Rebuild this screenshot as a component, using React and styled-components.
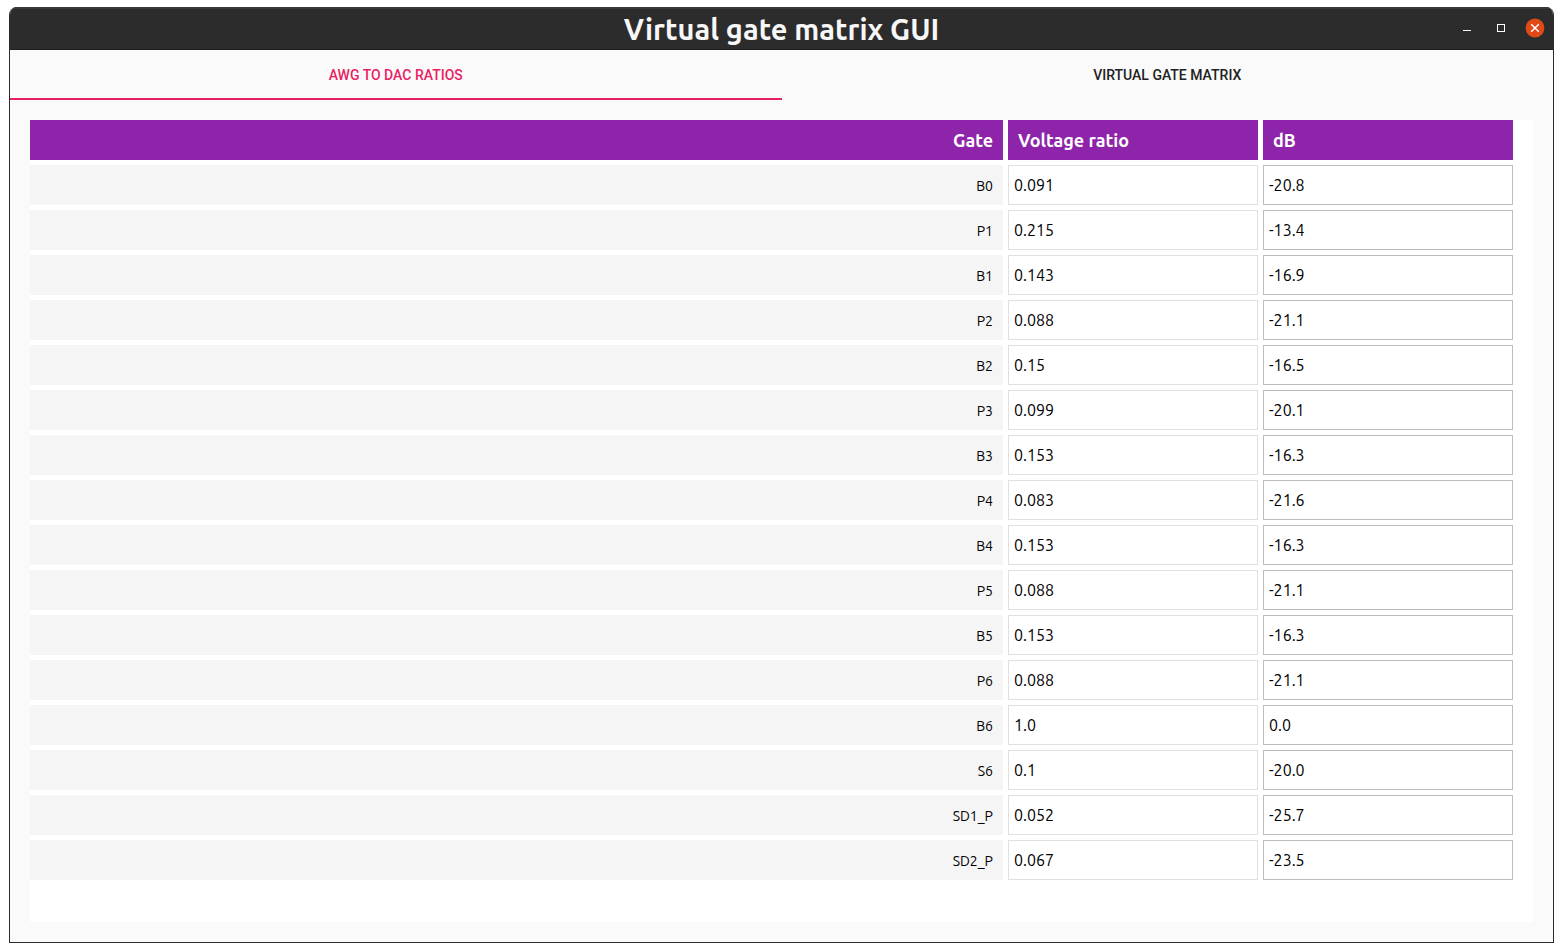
import React, { useState } from 'react';
import styled, { createGlobalStyle } from 'styled-components';

const GlobalStyle = createGlobalStyle`
    * {
        box-sizing: border-box;
    }

    body {
        margin: 0;
        background: #ffffff;
        font-family: Ubuntu, "Noto Sans", sans-serif;
        color: #000000;
    }
`;

const Page = styled.div`
    display: flex;
    min-height: 100vh;
    padding: 7px 9px 9px;
`;

const Window = styled.div`
    display: flex;
    flex: 1;
    flex-direction: column;
    border: 1px solid #2c2c2c;
    border-top: none;
    border-radius: 8px 8px 0 0;
    background: #fafafa;
    overflow: hidden;
`;

const TitleBar = styled.header`
    display: grid;
    grid-template-columns: 1fr auto 1fr;
    align-items: center;
    height: 43px;
    padding: 0 8px;
    background: #2c2c2c;
    border-top: 2px solid #383838;
    border-bottom: 1px solid #1e1e1e;
`;

const Title = styled.h1`
    grid-column: 2;
    margin: 0;
    font-size: 29px;
    line-height: 40px;
    font-weight: 700;
    color: #f7f7f7;
`;

const WindowButtons = styled.div`
    display: flex;
    justify-content: flex-end;
    gap: 14px;
    padding-bottom: 2px;
`;

const WindowButton = styled.button`
    display: flex;
    width: 20px;
    height: 20px;
    padding: 0;
    border: none;
    background: none;
`;

const Tabs = styled.div`
    display: flex;
    height: 50px;
`;

const Tab = styled.button`
    flex: 1;
    padding: 2px 0 0;
    border: none;
    border-bottom: 2px solid ${({ $active }) => ($active ? '#e91e63' : 'transparent')};
    background: none;
    font-family: Roboto, sans-serif;
    font-size: 14px;
    line-height: 20px;
    font-weight: 500;
    text-transform: uppercase;
    color: ${({ $active }) => ($active ? '#e91e63' : '#212121')};
`;

const Panel = styled.main`
    flex: 1;
    margin: 20px;
    padding: 0 20px 40px 0;
    background: #ffffff;
`;

const Table = styled.table`
    display: grid;
    gap: 5px;
`;

const TableGroup = styled.tbody`
    display: grid;
    gap: 5px;
`;

const Row = styled.tr`
    display: grid;
    grid-template-columns: 1fr 250px 250px;
    gap: 5px;
`;

const HeaderCell = styled.th`
    height: 40px;
    padding: 0 10px;
    background: #8e24aa;
    font-size: 18px;
    line-height: 40px;
    font-weight: 700;
    text-align: ${({ $align }) => $align || 'left'};
    color: #ffffff;
`;

const GateCell = styled.th`
    height: 40px;
    padding: 1px 10px 0;
    background: #f5f5f5;
    font-size: 14px;
    line-height: 40px;
    font-weight: 400;
    text-align: right;
`;

const Cell = styled.td`
    padding: 0;
`;

const ValueInput = styled.input`
    display: block;
    width: 100%;
    height: 40px;
    padding: 0 5px;
    border: 1px solid ${({ $strong }) => ($strong ? '#bdbdbd' : '#e0e0e0')};
    border-radius: 0;
    background: #ffffff;
    font-family: inherit;
    font-size: 16px;
    color: #000000;
`;

const tabs = ['AWG to DAC ratios', 'Virtual gate matrix'];

const gates = [
    { name: 'B0', ratio: '0.091', db: '-20.8' },
    { name: 'P1', ratio: '0.215', db: '-13.4' },
    { name: 'B1', ratio: '0.143', db: '-16.9' },
    { name: 'P2', ratio: '0.088', db: '-21.1' },
    { name: 'B2', ratio: '0.15', db: '-16.5' },
    { name: 'P3', ratio: '0.099', db: '-20.1' },
    { name: 'B3', ratio: '0.153', db: '-16.3' },
    { name: 'P4', ratio: '0.083', db: '-21.6' },
    { name: 'B4', ratio: '0.153', db: '-16.3' },
    { name: 'P5', ratio: '0.088', db: '-21.1' },
    { name: 'B5', ratio: '0.153', db: '-16.3' },
    { name: 'P6', ratio: '0.088', db: '-21.1' },
    { name: 'B6', ratio: '1.0', db: '0.0' },
    { name: 'S6', ratio: '0.1', db: '-20.0' },
    { name: 'SD1_P', ratio: '0.052', db: '-25.7' },
    { name: 'SD2_P', ratio: '0.067', db: '-23.5' },
];

const WindowControls = () => (
    <WindowButtons>
        <WindowButton aria-label="Minimize">
            <svg width="20" height="20" viewBox="0 0 20 20">
                <rect x="6" y="12" width="8" height="1" fill="#ffffff" />
            </svg>
        </WindowButton>
        <WindowButton aria-label="Maximize">
            <svg width="20" height="20" viewBox="0 0 20 20">
                <rect x="6.5" y="6.5" width="7" height="7" fill="none" stroke="#ffffff" />
            </svg>
        </WindowButton>
        <WindowButton aria-label="Close">
            <svg width="20" height="20" viewBox="0 0 20 20">
                <circle cx="10" cy="10" r="9.4" fill="#e04a16" />
                <path d="M6.2 6.2l7.6 7.6M13.8 6.2l-7.6 7.6" stroke="#ffffff" strokeWidth="1.5" />
            </svg>
        </WindowButton>
    </WindowButtons>
);

const RatioTable = () => (
    <Table>
        <TableGroup as="thead">
            <Row>
                <HeaderCell scope="col" $align="right">Gate</HeaderCell>
                <HeaderCell scope="col">Voltage ratio</HeaderCell>
                <HeaderCell scope="col">dB</HeaderCell>
            </Row>
        </TableGroup>
        <TableGroup>
            {gates.map(({ name, ratio, db }) => (
                <Row key={name}>
                    <GateCell scope="row">{name}</GateCell>
                    <Cell>
                        <ValueInput aria-label={`${name} voltage ratio`} defaultValue={ratio} />
                    </Cell>
                    <Cell>
                        <ValueInput $strong aria-label={`${name} dB`} defaultValue={db} />
                    </Cell>
                </Row>
            ))}
        </TableGroup>
    </Table>
);

const App = () => {
    const [active, setActive] = useState(0);

    return (
        <Page>
            <GlobalStyle />
            <Window>
                <TitleBar>
                    <Title>Virtual gate matrix GUI</Title>
                    <WindowControls />
                </TitleBar>
                <Tabs role="tablist">
                    {tabs.map((label, index) => (
                        <Tab
                            key={label}
                            role="tab"
                            aria-selected={active === index}
                            $active={active === index}
                            onClick={() => setActive(index)}
                        >
                            {label}
                        </Tab>
                    ))}
                </Tabs>
                <Panel>
                    {active === 0 && <RatioTable />}
                </Panel>
            </Window>
        </Page>
    );
};

export default App;
